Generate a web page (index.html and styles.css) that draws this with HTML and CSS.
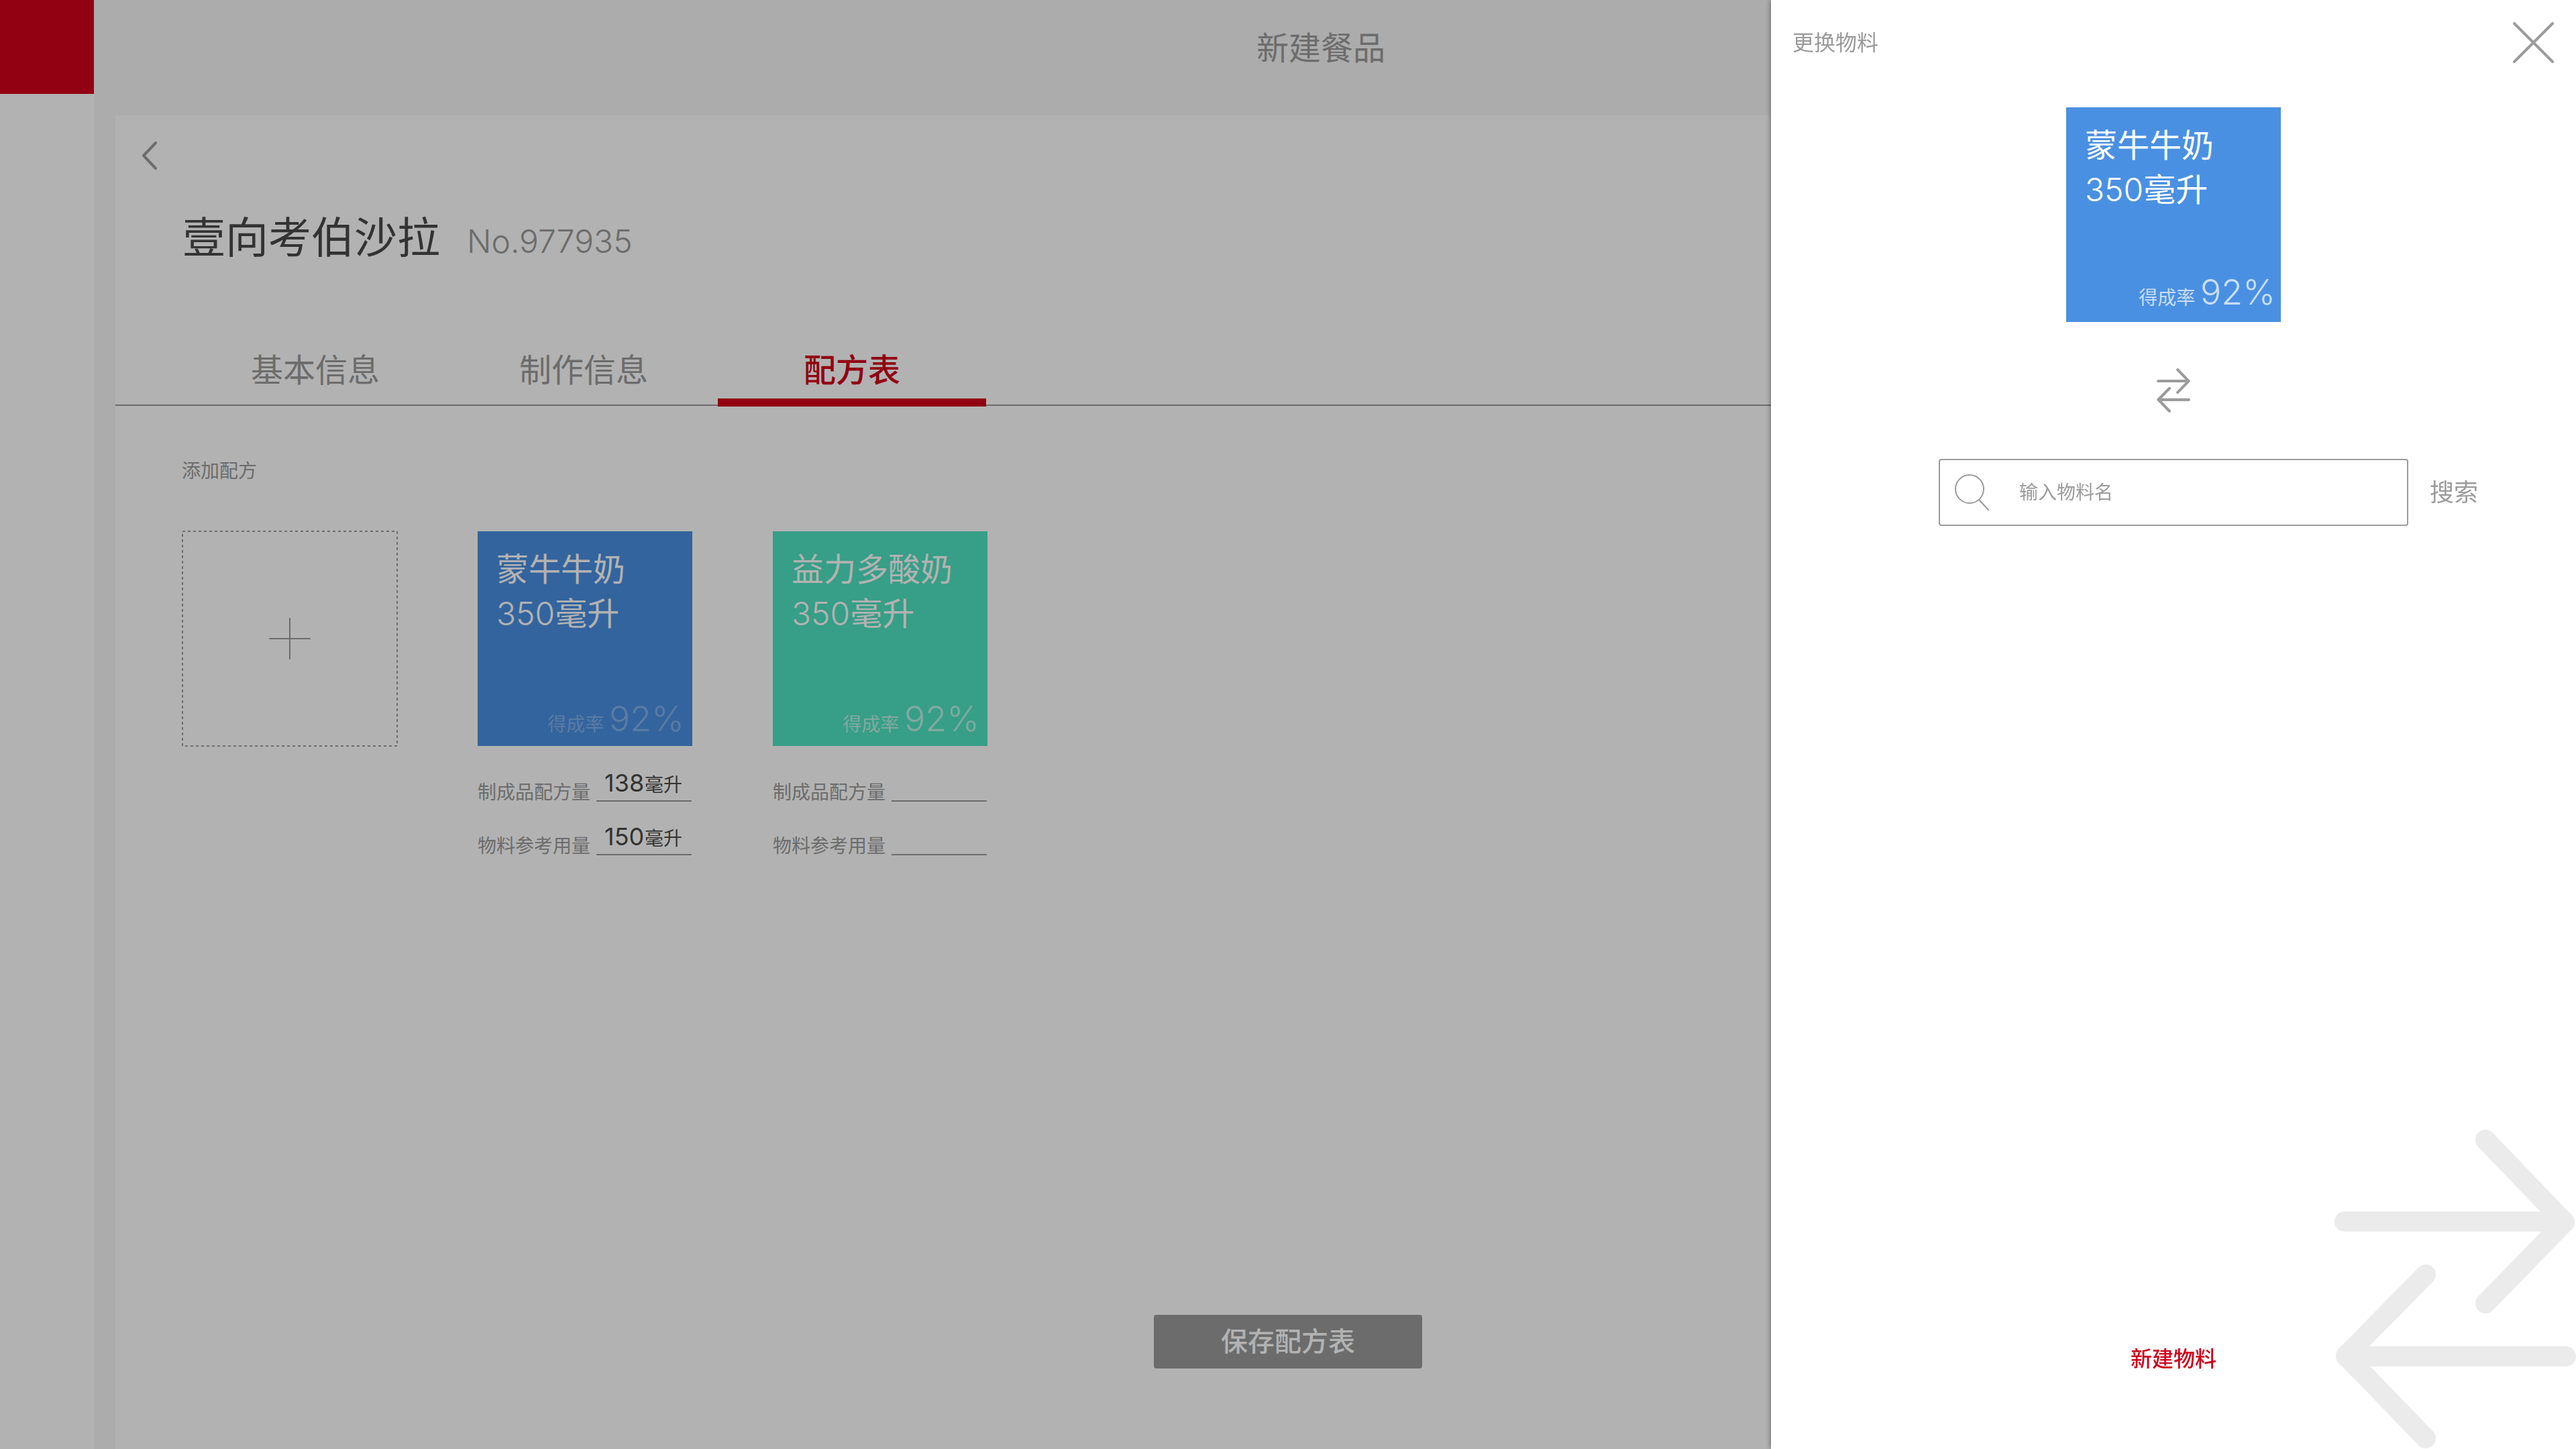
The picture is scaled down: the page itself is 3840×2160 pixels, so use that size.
FILE: index.html
```html
<!DOCTYPE html>
<html lang="zh-CN">
<head>
<meta charset="utf-8">
<meta name="viewport" content="width=device-width, initial-scale=1">
<title>新建餐品</title>
<link rel="stylesheet" href="styles.css">
</head>
<body>
<div class="app">
  <aside class="sidebar"><div class="brand"></div></aside>
  <div class="page">
    <header class="topbar"><h1 class="topbar-title">新建餐品</h1></header>
    <main class="sheet">
      <button class="back" type="button" aria-label="返回">
        <svg viewBox="0 0 24 42"><path d="M21 2 3 21 21 40"/></svg>
      </button>
      <div class="dish">
        <h2 class="dish-name">壹向考伯沙拉</h2>
        <span class="dish-no">No.977935</span>
      </div>
      <nav class="tabs">
        <a class="tab" href="#basic">基本信息</a>
        <a class="tab" href="#making">制作信息</a>
        <a class="tab tab-active" href="#recipe">配方表</a>
      </nav>
      <section class="recipe">
        <h3 class="recipe-title">添加配方</h3>
        <div class="items">
          <button class="add" type="button" aria-label="添加">
            <svg class="dash" viewBox="0 0 322 322"><rect x="1" y="1" width="320" height="320"/></svg>
            <svg class="plus" viewBox="0 0 62 62"><path d="M1 31H61M31 1V61"/></svg>
          </button>
          <article class="item">
            <div class="card card-blue card-faded">
              <p class="card-name">蒙牛牛奶<br><span class="num">350</span>毫升</p>
              <p class="rate">得成率 <b class="rate-value">92%</b></p>
            </div>
            <div class="fields">
              <div class="field"><label for="a1">制成品配方量</label><span class="entry"><input id="a1" value="138"><span class="unit">毫升</span></span></div>
              <div class="field"><label for="a2">物料参考用量</label><span class="entry"><input id="a2" value="150"><span class="unit">毫升</span></span></div>
            </div>
          </article>
          <article class="item">
            <div class="card card-green">
              <p class="card-name">益力多酸奶<br><span class="num">350</span>毫升</p>
              <p class="rate">得成率 <b class="rate-value">92%</b></p>
            </div>
            <div class="fields">
              <div class="field"><label for="b1">制成品配方量</label><span class="entry"><input id="b1"></span></div>
              <div class="field"><label for="b2">物料参考用量</label><span class="entry"><input id="b2"></span></div>
            </div>
          </article>
        </div>
      </section>
      <button class="save" type="button">保存配方表</button>
    </main>
  </div>
</div>
<div class="mask"></div>
<aside class="drawer">
  <header class="drawer-head">
    <h2 class="drawer-title">更换物料</h2>
    <button class="close" type="button" aria-label="关闭">
      <svg viewBox="0 0 62 62"><path d="M2 2 59 59M59 2 2 59"/></svg>
    </button>
  </header>
  <div class="card card-blue card-current">
    <p class="card-name">蒙牛牛奶<br><span class="num">350</span>毫升</p>
    <p class="rate">得成率 <b class="rate-value">92%</b></p>
  </div>
  <svg class="swap" viewBox="0 0 360 476"><path d="M15 137H343M225 15 343 138 225 259M345 338H17M136 216 17 337 136 460"/></svg>
  <form class="search">
    <div class="search-box">
      <svg viewBox="0 0 52 54"><circle cx="22" cy="22" r="21"/><path d="M36 38 50 53"/></svg>
      <input type="search" aria-label="物料名" placeholder="输入物料名">
    </div>
    <button class="search-go" type="button">搜索</button>
  </form>
  <a class="create" href="#new">新建物料</a>
  <svg class="swap-large" viewBox="0 0 360 476"><path d="M15 137H343M225 15 343 138 225 259M345 338H17M136 216 17 337 136 460"/></svg>
</aside>
</body>
</html>
```
FILE: styles.css
```css
* {
  box-sizing: border-box;
}

body {
  margin: 0;
  color: #9b9b9b;
  background: #f7f7f7;
  font-family: Inter, "Noto Sans CJK SC", sans-serif;
  font-size: 28px;
  font-weight: 400;
  line-height: 40px;
}

h1, h2, h3, p {
  margin: 0;
  font-weight: inherit;
}

button, input {
  padding: 0;
  border: 0;
  color: inherit;
  background: none;
  font: inherit;
}

a {
  color: inherit;
  text-decoration: none;
}

svg {
  display: block;
  fill: none;
  stroke: #9b9b9b;
  stroke-linecap: round;
  stroke-linejoin: round;
}

.num {
  font-weight: 300;
}

.app {
  display: flex;
  min-height: 100vh;
}

.sidebar {
  width: 140px;
  background: #fff;
}

.brand {
  height: 140px;
  background: #d0021b;
}

.page {
  flex: 1;
  display: flex;
  flex-direction: column;
  padding: 0 32px;
}

.topbar {
  display: flex;
  align-items: center;
  justify-content: center;
  height: 172px;
  padding: 0 42px 28px 0;
}

.topbar-title {
  font-size: 48px;
  line-height: 64px;
}

.sheet {
  flex: 1;
  display: flex;
  flex-direction: column;
  background: #fff;
}

.back {
  width: 24px;
  height: 42px;
  margin: 39px 0 0 39px;
}

.back svg {
  stroke-width: 4;
}

.dish {
  display: flex;
  align-items: baseline;
  gap: 40px;
  padding: 53px 0 0 100px;
}

.dish-name {
  color: #4a4a4a;
  font-size: 64px;
  line-height: 96px;
}

.dish-no {
  font-size: 48px;
  font-weight: 300;
}

.tabs {
  display: flex;
  height: 204px;
  padding-left: 98px;
  align-items: flex-end;
  background: linear-gradient(#9b9b9b, #9b9b9b) 0 calc(100% - 1px) / 100% 2px no-repeat;
}

.tab {
  width: 400px;
  padding: 12px 0 10px;
  border-bottom: 12px solid transparent;
  font-size: 48px;
  line-height: 64px;
  text-align: center;
}

.tab-active {
  border-color: #d0021b;
  color: #d0021b;
  font-weight: 500;
}

.recipe {
  padding: 76px 0 0 99px;
}

.recipe-title {
  font-size: 28px;
}

.items {
  display: flex;
  gap: 120px;
  margin-top: 69px;
}

.add {
  display: grid;
  place-items: center;
  width: 321px;
  height: 322px;
}

.add svg {
  grid-area: 1 / 1;
  stroke-width: 2;
}

.dash {
  width: 322px;
  stroke-dasharray: 4 4;
  stroke-linecap: butt;
}

.plus {
  width: 62px;
}

.item {
  width: 320px;
  padding-top: 1px;
}

.card {
  display: flex;
  flex-direction: column;
  justify-content: space-between;
  width: 320px;
  height: 320px;
  padding: 24px 12px 12px 28px;
  color: #fff;
}

.card-blue {
  background: #4a90e2;
}

.card-green {
  background: #50e3c2;
}

.card-name {
  font-size: 48px;
  line-height: 66px;
}

.rate {
  opacity: .6;
  text-align: right;
  white-space: nowrap;
}

.card-faded .rate {
  opacity: .3;
}

.rate-value {
  font-size: 52px;
  font-weight: 300;
}

.fields {
  display: grid;
  gap: 32px;
  padding-top: 35px;
}

.field {
  display: flex;
  gap: 9px;
  align-items: flex-end;
  height: 48px;
}

.field label {
  line-height: 28px;
}

.entry {
  display: flex;
  align-items: baseline;
  width: 142px;
  height: 48px;
  padding-left: 12px;
  border-bottom: 2px solid #9b9b9b;
  color: #4a4a4a;
}

.entry input {
  width: 60px;
  height: 40px;
  font-size: 36px;
}

.save {
  align-self: center;
  width: 400px;
  height: 80px;
  margin: auto 140px 120px 0;
  border-radius: 4px;
  color: #fff;
  background: #9b9b9b;
  font-size: 40px;
  font-weight: 500;
}

.mask {
  position: fixed;
  inset: 0;
  background: rgba(0, 0, 0, .3);
}

.drawer {
  position: fixed;
  inset: 0 0 0 auto;
  display: flex;
  flex-direction: column;
  align-items: center;
  width: 1200px;
  background: #fff;
  box-shadow: 0 0 8px rgba(0, 0, 0, .5);
}

.drawer-head {
  display: flex;
  justify-content: space-between;
  align-items: center;
  width: 100%;
  height: 128px;
  padding: 0 32px;
}

.drawer-title {
  font-size: 32px;
}

.close {
  width: 62px;
  height: 62px;
}

.close svg {
  stroke-width: 4;
}

.card-current {
  margin-top: 32px;
  padding-right: 8px;
  padding-bottom: 16px;
}

.card-current .rate {
  opacity: .7;
}

.swap {
  width: 50px;
  height: 66px;
  margin-top: 69px;
  stroke-width: 30;
}

.search {
  display: flex;
  align-items: center;
  gap: 32px;
  margin: 69px 0 0 104px;
}

.search-box {
  display: flex;
  align-items: center;
  width: 700px;
  height: 100px;
  padding: 0 22px;
  border: 2px solid #9b9b9b;
  border-radius: 4px;
}

.search-box svg {
  width: 52px;
  height: 54px;
  stroke-width: 2;
}

.search-box input {
  flex: 1;
  margin-left: 44px;
  outline: none;
}

.search-box input::placeholder {
  color: #9b9b9b;
  opacity: 1;
}

.search-go {
  font-size: 36px;
}

.create {
  margin-top: auto;
  margin-bottom: 114px;
  color: #d0021b;
  font-size: 32px;
  font-weight: 500;
}

.swap-large {
  position: absolute;
  right: 0;
  bottom: 0;
  width: 360px;
  height: 476px;
  stroke: #ebebeb;
  stroke-width: 30;
}
```
